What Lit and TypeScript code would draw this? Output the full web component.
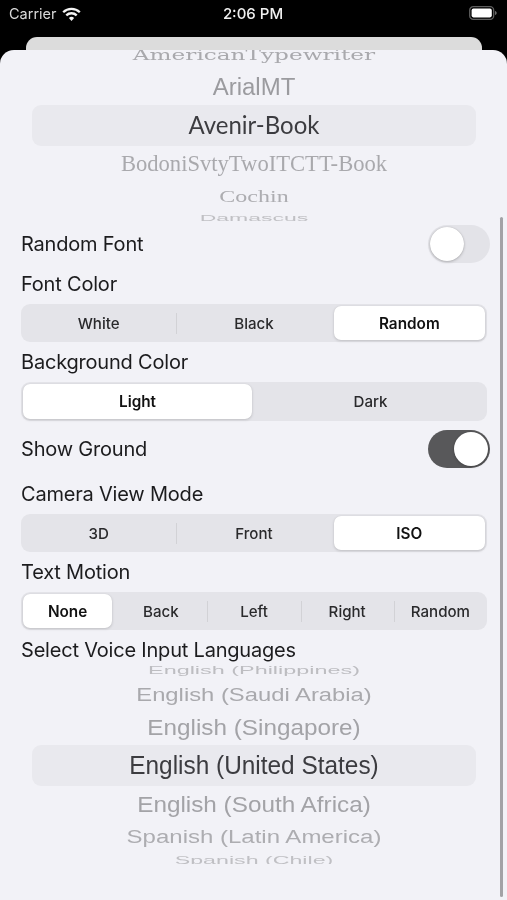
import { LitElement, html, css, svg } from "lit";
import { customElement } from "lit/decorators.js";

type Row = { t: string; h: number; fs: number; sy: number; dy: number; c: string; f: string; sel?: boolean };

const SANS = `"Liberation Sans", Arial, sans-serif`;
const SERIF = `"Liberation Serif", serif`;
const SLAB = `"DejaVu Serif", serif`;
const BOOK = `Lato, sans-serif`;

const fontRows: Row[] = [
  { t: "AmericanTypewriter", h: 18, fs: 23.2, sy: 0.62, dy: -4, c: "#a9a9ad", f: SLAB },
  { t: "ArialMT", h: 37, fs: 24, sy: 0.96, dy: 0, c: "#9b9b9f", f: SANS },
  { t: "Avenir-Book", h: 41, fs: 24, sy: 1.04, dy: -1, c: "#3c3c40", f: BOOK, sel: true },
  { t: "BodoniSvtyTwoITCTT-Book", h: 36, fs: 22.6, sy: 1.04, dy: 0, c: "#a9a9ad", f: SERIF },
  { t: "Cochin", h: 26, fs: 24, sy: 0.7, dy: 1.5, c: "#adadb1", f: SERIF },
  { t: "Damascus", h: 14, fs: 23, sy: 0.42, dy: 2, c: "#c0c0c4", f: SANS },
];

const langRows: Row[] = [
  { t: "English (Philippines)", h: 16, fs: 23.4, sy: 0.48, dy: -3, c: "#bdbdc1", f: SANS },
  { t: "English (Saudi Arabia)", h: 26, fs: 23.8, sy: 0.76, dy: 0, c: "#a9a9ad", f: SANS },
  { t: "English (Singapore)", h: 37, fs: 24.3, sy: 0.94, dy: 1, c: "#a3a3a7", f: SANS },
  { t: "English (United States)", h: 41, fs: 24.4, sy: 1.05, dy: 1, c: "#3c3c40", f: SANS, sel: true },
  { t: "English (South Africa)", h: 36, fs: 24.3, sy: 0.94, dy: 0, c: "#a3a3a7", f: SANS },
  { t: "Spanish (Latin America)", h: 28, fs: 24, sy: 0.76, dy: 1, c: "#adadb1", f: SANS },
  { t: "Spanish (Chile)", h: 14, fs: 23.2, sy: 0.46, dy: 3.5, c: "#c0c0c4", f: SANS },
];

@customElement("app-root")
export class AppRoot extends LitElement {
  static styles = css`
    :host {
      display: block;
      height: 900px;
      overflow: hidden;
      background: #000;
      font-family: Inter, "Noto Sans", sans-serif;
      color: #1c1c1e;
      filter: blur(0.3px);
    }
    .status {
      height: 37px;
      display: grid;
      grid-template-columns: 1fr auto 1fr;
      align-items: start;
      padding: 5px 10px 0 9px;
      box-sizing: border-box;
      color: #e6e6e6;
    }
    .left { display: flex; align-items: center; gap: 5px; }
    .carrier { font-size: 14.5px; line-height: 18px; color: #d8d8d8; }
    .time { font-size: 15px; line-height: 18px; font-weight: 500; color: #f0f0f0; }
    .battery { justify-self: end; display: block; margin-top: 1px; }
    .back {
      height: 13px;
      margin: 0 25px 0 26px;
      background: #dcdcdc;
      border-radius: 11px 11px 0 0;
    }
    .sheet {
      position: relative;
      height: 850px;
      background: #f2f2f7;
      border-radius: 14px 14px 0 0;
      padding: 0 20px 0 21px;
      box-sizing: border-box;
    }
    .picker { margin: 0 -20px 0 -21px; overflow: hidden; }
    .p1 { height: 172px; }
    .p2 { height: 198px; }
    .prow {
      display: flex;
      align-items: center;
      justify-content: center;
      overflow: hidden;
      margin: 0 31px 0 32px;
      white-space: nowrap;
    }
    .prow.sel { background: #e9e9ee; border-radius: 9px; }
    .prow span { display: block; line-height: 1; flex: none; }
    .row {
      display: flex;
      align-items: center;
      justify-content: space-between;
      font-size: 20px;
      letter-spacing: -0.2px;
    }
    .r-switch1 { height: 38px; margin-top: 3px; }
    .r-switch2 { height: 38px; margin-top: 9px; }
    .label { height: 40px; font-size: 20px; letter-spacing: -0.2px; display: flex; align-items: center; }
    .l-font { height: 41px; }
    .l-cam { height: 40px; margin-top: 6px; }
    .l-voice { height: 36px; align-items: flex-start; padding-top: 8px; box-sizing: border-box; line-height: 24px; }
    .switch {
      width: 62px;
      height: 38px;
      margin-right: -3px;
      border-radius: 19px;
      background: #e3e3e8;
      padding: 2px;
      box-sizing: border-box;
      display: flex;
    }
    .switch.on { background: #58585a; justify-content: flex-end; }
    .knob {
      width: 34px;
      height: 34px;
      border-radius: 50%;
      background: #fff;
      box-shadow: 0 1px 3px rgba(0, 0, 0, 0.22), 0 0 1px rgba(0, 0, 0, 0.2);
    }
    .seg {
      display: grid;
      grid-auto-flow: column;
      grid-auto-columns: 1fr;
      height: 38px;
      background: #e4e4e9;
      border-radius: 9px;
    }
    .seg.tall { height: 39px; }
    .item {
      display: flex;
      align-items: center;
      justify-content: center;
      font-size: 15.1px;
      font-weight: 500;
      color: #2a2a2c;
    }
    .item.sep {
      background: linear-gradient(#d2d2d6, #d2d2d6) left center / 1px 21px no-repeat;
    }
    .item.sel {
      margin: 2px;
      background: #fff;
      border-radius: 7px;
      font-size: 15.3px;
      font-weight: 600;
      color: #111;
      box-shadow: 0 1px 3px rgba(0, 0, 0, 0.16), 0 0 1px rgba(0, 0, 0, 0.1);
    }
    .scroll {
      position: absolute;
      left: 500px;
      top: 167px;
      width: 3px;
      height: 680px;
      border-radius: 2px;
      background: #a2a2a6;
    }
  `;

  private wifi() {
    return svg`<svg width="19" height="15" viewBox="0 0 19 15" aria-hidden="true">
      <g fill="none" stroke="#f4f4f4" stroke-width="2.3">
        <path d="M1.2 5.2a11.8 11.8 0 0 1 16.6 0" />
        <path d="M4.3 8.4a7.4 7.4 0 0 1 10.4 0" />
      </g>
      <path d="M6.9 11.1a3.7 3.7 0 0 1 5.2 0L9.5 14z" fill="#f4f4f4" />
    </svg>`;
  }

  private battery() {
    return svg`<svg class="battery" width="28" height="14" viewBox="0 0 28 14" aria-hidden="true">
      <rect x="0.7" y="0.7" width="24" height="12.6" rx="3.6" fill="none" stroke="#5e5e5e" stroke-width="1.3" />
      <rect x="2.6" y="2.6" width="20.2" height="8.8" rx="1.8" fill="#fff" />
      <path d="M26 5v4c1-.3 1.7-1.1 1.7-2S27 5.300 26 5z" fill="#6a6a6a" />
    </svg>`;
  }

  private picker(cls: string, rows: Row[]) {
    return html`<div class="picker ${cls}">
      ${rows.map(
        (r) => html`<div class="prow ${r.sel ? "sel" : ""}" style="height:${r.h}px">
          <span
            style="font-family:${r.f};font-size:${r.fs}px;color:${r.c};transform:translateY(${r.dy}px) scaleY(${r.sy})"
            >${r.t}</span
          >
        </div>`
      )}
    </div>`;
  }

  private seg(items: string[], selected: number, tall = false) {
    return html`<div class="seg ${tall ? "tall" : ""}">
      ${items.map((t, i) => {
        const sep = i > 0 && i !== selected && i - 1 !== selected;
        return html`<div class="item ${i === selected ? "sel" : ""} ${sep ? "sep" : ""}">${t}</div>`;
      })}
    </div>`;
  }

  render() {
    return html`
      <div class="status">
        <div class="left"><span class="carrier">Carrier</span>${this.wifi()}</div>
        <div class="time">2:06 PM</div>
        ${this.battery()}
      </div>
      <div class="back"></div>
      <div class="sheet">
        ${this.picker("p1", fontRows)}
        <div class="row r-switch1"><span>Random Font</span><div class="switch"><div class="knob"></div></div></div>
        <div class="label l-font">Font Color</div>
        ${this.seg(["White", "Black", "Random"], 2)}
        <div class="label">Background Color</div>
        ${this.seg(["Light", "Dark"], 0, true)}
        <div class="row r-switch2"><span>Show Ground</span><div class="switch on"><div class="knob"></div></div></div>
        <div class="label l-cam">Camera View Mode</div>
        ${this.seg(["3D", "Front", "ISO"], 2)}
        <div class="label">Text Motion</div>
        ${this.seg(["None", "Back", "Left", "Right", "Random"], 0)}
        <div class="label l-voice">Select Voice Input Languages</div>
        ${this.picker("p2", langRows)}
        <div class="scroll"></div>
      </div>
    `;
  }
}
